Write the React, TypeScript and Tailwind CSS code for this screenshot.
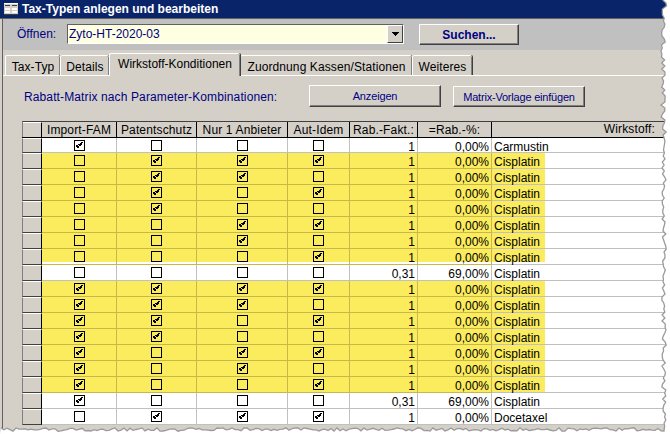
import React from "react";

const COLS = [
  "w-[75px]",
  "w-[80px]",
  "w-[91px]",
  "w-[62px]",
];

type Row = { c: number[]; y: boolean; f: string; p: string; n: string; short?: boolean };
const R = (c: string, y: boolean, f = "1", p = "0,00%", n = "Cisplatin", short = false): Row => ({
  c: c.split("").map(Number), y, f, p, n, short,
});
const rows: Row[] = [
  R("1000", false, "1", "0,00%", "Carmustin"),
  R("0111", true),
  R("0110", true),
  R("0101", true),
  R("0100", true),
  R("0011", true),
  R("0010", true),
  R("0001", true, "1", "0,00%", "Cisplatin", true),
  R("0000", false, "0,31", "69,00%"),
  R("1111", true),
  R("1110", true),
  R("1101", true),
  R("1100", true),
  R("1011", true),
  R("1010", true),
  R("1001", true),
  R("1000", false, "0,31", "69,00%"),
  R("0111", false, "1", "0,00%", "Docetaxel"),
];

function Check({ on }: { on: boolean }) {
  return (
    <span className="mt-[2px] block h-[11px] w-[11px] border border-black">
      {on && (
        <svg width="9" height="9" viewBox="0 0 9 9" shapeRendering="crispEdges" className="block">
          <path d="M1 4h2v1H1zM1 5h3v1H1zM2 6h2v1H2zM3 3h1v1H3zM4 4h1v1H4zM4 3h1v1H4zM5 2h1v3H5zM6 1h2v1H6zM6 2h1v2H6z" fill="#000" />
        </svg>
      )}
    </span>
  );
}

function Btn({ cls, children }: { cls: string; children: React.ReactNode }) {
  return (
    <button className={"flex items-center justify-center border border-t-white border-l-white border-r-[#404040] border-b-[#404040] bg-[#d4d0c8] text-[#000080] shadow-[inset_-1px_-1px_0_#808080] " + cls}>
      {children}
    </button>
  );
}

function Tab({ w, active, children }: { w: string; active?: boolean; children: React.ReactNode }) {
  return active ? (
    <div className={"relative z-10 -mb-[1px] flex h-[23px] items-start justify-center rounded-t-[2px] border-t border-l border-white bg-[#d4d0c8] pt-[3px] shadow-[inset_-1px_0_0_#808080,1px_0_0_#404040] " + w}>
      {children}
    </div>
  ) : (
    <div className={"flex h-[20px] items-center justify-center rounded-t-[2px] border-t border-l border-white bg-[#d4d0c8] pt-[2px] tracking-[0.1px] shadow-[inset_-1px_0_0_#808080,1px_0_0_#404040] " + w}>
      {children}
    </div>
  );
}

function tornPoints() {
  let s = 12345;
  const rnd = () => {
    s = (s * 16807) % 2147483647;
    return s / 2147483647;
  };
  const pts: [number, number][] = [];
  for (let y = 0; y <= 428; y += 3) {
    const base = y < 18 ? 664.5 : y < 120 ? 663 : 664;
    pts.push([base + (rnd() - 0.5) * 4.5, y]);
  }
  for (let x = 664; x >= 0; x -= 3) {
    pts.push([x, 429.5 + (rnd() - 0.5) * 3.5]);
  }
  return pts.map((p) => p[0].toFixed(1) + " " + p[1].toFixed(1)).join(" L");
}

function Torn() {
  const d = "M" + tornPoints();
  return (
    <svg width="670" height="434" viewBox="0 0 670 434" className="pointer-events-none absolute left-0 top-0">
      <path d={d + " L0 434 L670 434 L670 0 Z"} fill="#fff" />
      <path d={d} fill="none" stroke="#9a9a9a" strokeWidth="1.3" />
    </svg>
  );
}

export default function App() {
  return (
    <div className="relative h-[434px] w-[670px] overflow-hidden bg-white font-['Liberation_Sans',Arial,sans-serif] text-[12px] leading-[14px] text-black">
      {/* title bar */}
      <div className="flex h-[18px] items-center gap-[4px] bg-[#0a246a] pl-[4px] text-[12px] font-bold text-white">
        <svg width="14" height="12" viewBox="0 0 14 12" shapeRendering="crispEdges" className="shrink-0">
          <rect width="14" height="12" fill="#d4d0c8" />
          <rect x="0" y="0" width="14" height="1" fill="#fff" />
          <rect x="1" y="2" width="5" height="1" fill="#404040" />
          <rect x="8" y="2" width="5" height="1" fill="#404040" />
          <rect x="1" y="5" width="5" height="2" fill="#fff" />
          <rect x="8" y="5" width="5" height="2" fill="#fff" />
          <rect x="1" y="8" width="5" height="2" fill="#fff" />
          <rect x="8" y="8" width="5" height="2" fill="#fff" />
          <rect x="0" y="11" width="14" height="1" fill="#404040" />
        </svg>
        <span>Tax-Typen anlegen und bearbeiten</span>
      </div>

      {/* window body */}
      <div className="flex h-[416px] border-t border-[#606060] bg-[#d4d0c8]">
        <div className="w-[2px] shrink-0 bg-[#d4d0c8]" />
        <div className="w-[1px] shrink-0 bg-[#606060]" />
        <div className="min-w-0 flex-1">
          {/* header */}
          <div className="flex h-[31px] items-start bg-[#c0c0c0] pl-[14px] pt-[5px] text-[#000080]">
            <span className="mt-[3px] w-[50px]">Öffnen:</span>
            <div className="flex h-[20px] w-[337px] items-center justify-between border border-t-[#606060] border-l-[#606060] border-r-white border-b-white bg-[#ffffe1] pl-[1px]">
              <span>Zyto-HT-2020-03</span>
              <span className="flex h-[18px] w-[16px] items-center justify-center border border-t-white border-l-white border-r-[#404040] border-b-[#404040] bg-[#d4d0c8]">
                <svg width="7" height="4" viewBox="0 0 7 4" shapeRendering="crispEdges"><path d="M0 0h7L3.5 4z" fill="#000" /></svg>
              </span>
            </div>
            <Btn cls="ml-[15px] h-[21px] w-[100px] font-bold">Suchen...</Btn>
          </div>

          {/* tabs */}
          <div className="flex h-[26px] items-end border-b border-white pl-[2px]">
            <Tab w="w-[55px]">Tax-Typ</Tab>
            <Tab w="w-[49px]">Details</Tab>
            <Tab w="w-[131px]" active>Wirkstoff-Konditionen</Tab>
            <Tab w="w-[172px]">Zuordnung Kassen/Stationen</Tab>
            <Tab w="w-[60px]">Weiteres</Tab>
          </div>

          {/* toolbar */}
          <div className="flex h-[45px] items-start pl-[21px] pt-[9px] text-[#000080]">
            <span className="mt-[5px] w-[285px] tracking-[0.12px]">Rabatt-Matrix nach Parameter-Kombinationen:</span>
            <Btn cls="h-[22px] w-[132px] text-[11px] tracking-[-0.15px]">Anzeigen</Btn>
            <Btn cls="ml-[12px] mt-[1px] h-[21px] w-[132px] text-[11px] tracking-[-0.2px]">Matrix-Vorlage einfügen</Btn>
          </div>

          {/* datasheet */}
          <div className="ml-[19px]">
            <div className="flex h-[16px] border-t border-l border-t-[#404040] border-l-[#808080] bg-[#d4d0c8] tracking-[0.15px]">
              <div className="w-[19px] shrink-0 border-r border-black border-t border-t-white" />
              {["Import-FAM", "Patentschutz", "Nur 1 Anbieter", "Aut-Idem"].map((t, i) => (
                <div key={t} className={"flex shrink-0 items-center justify-center border-r border-black " + COLS[i]}>{t}</div>
              ))}
              <div className="flex w-[68px] shrink-0 items-center justify-center border-r border-black">Rab.-Fakt.:</div>
              <div className="flex w-[74px] shrink-0 items-center justify-center border-r border-black">=Rab.-%:</div>
              <div className="flex-1 pr-[15px] text-right">Wirkstoff:</div>
            </div>
            {rows.map((r, i) => {
              const line = r.y ? "border-[#c8b84c]" : "border-[#c0c0c0]";
              const bg = r.y ? "bg-[#fbec5d]" : "bg-white";
              const clip = r.short ? " pb-[2px] bg-clip-content" : "";
              const cell = "h-full shrink-0 border-b border-r " + line + " " + bg + clip;
              return (
                <div key={i} className={"flex bg-white " + (i === 0 ? "h-[16px] border-t border-black" : "h-[16px]")}>
                  <div className="h-full w-[20px] shrink-0 border-b border-r border-b-[#404040] border-r-black border-t border-t-white border-l border-l-[#808080] bg-[#d4d0c8]" />
                  {r.c.map((v, j) => (
                    <div key={j} className={"flex items-start justify-center " + cell + " " + COLS[j]}>
                      <Check on={!!v} />
                    </div>
                  ))}
                  <div className={"w-[68px] text-right " + cell}><div className="pr-[2px] pt-[2px]">{r.f}</div></div>
                  <div className={"w-[74px] text-right " + cell}><div className="pr-[2px] pt-[2px]">{r.p}</div></div>
                  <div className="flex h-full flex-1 border-b border-[#c0c0c0]">
                    <div className={"w-[53px] " + (r.y ? "bg-[#fbec5d] " : "") + (r.short ? "h-[13px]" : "h-full")}><div className="pl-[2px] pt-[2px]">{r.n}</div></div>
                  </div>
                </div>
              );
            })}
          </div>
        </div>
      </div>
      <Torn />
    </div>
  );
}
